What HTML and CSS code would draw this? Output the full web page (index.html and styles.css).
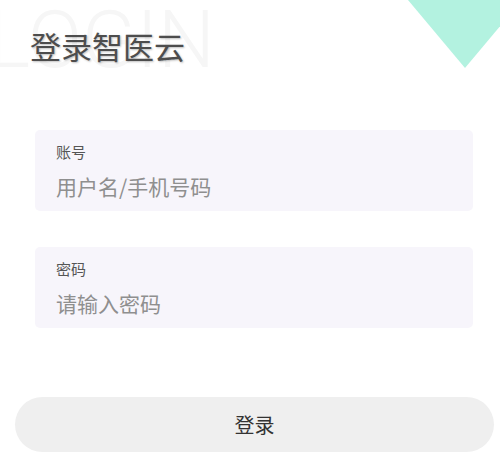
FILE: index.html
```html
<!DOCTYPE html>
<html lang="zh-CN">
<head>
<meta charset="utf-8">
<title>登录智医云</title>
<link rel="stylesheet" href="styles.css">
</head>
<body>
<div class="page">
  <header class="header">
    <div class="watermark">LOGIN</div>
    <div class="corner"></div>
    <h1 class="title">登录智医云</h1>
  </header>
  <form class="form">
    <label class="field">
      <span class="field-label">账号</span>
      <input class="field-input" type="text" placeholder="用户名/手机号码">
    </label>
    <label class="field">
      <span class="field-label">密码</span>
      <input class="field-input" type="password" placeholder="请输入密码">
    </label>
  </form>
  <div class="actions">
    <button class="login-btn" type="button">登录</button>
  </div>
</div>
</body>
</html>
```

FILE: styles.css
```css
html, body {
  margin: 0;
  padding: 0;
  background: #fff;
}
body {
  font-family: "Noto Sans CJK SC", "Noto Sans", sans-serif;
  width: 500px;
  height: 466px;
  overflow: hidden;
}
.page {
  position: relative;
  width: 500px;
  height: 466px;
}
.header {
  position: relative;
  height: 100px;
}
.watermark {
  position: absolute;
  left: -12px;
  top: -5px;
  font-family: Roboto, "Liberation Sans", sans-serif;
  font-weight: 300;
  font-size: 80px;
  line-height: 90px;
  color: #f6f6f6;
  white-space: nowrap;
  z-index: 0;
}
.corner {
  position: absolute;
  right: -22px;
  top: 0;
  width: 0;
  height: 0;
  border-left: 57px solid transparent;
  border-right: 57px solid transparent;
  border-top: 68px solid #b3f2e0;
}
.title {
  position: relative;
  z-index: 1;
  margin: 0;
  padding: 25px 0 0 30px;
  font-size: 31px;
  line-height: 42px;
  font-weight: 400;
  color: #4d4d4d;
  text-shadow: 1px 1px 2px rgba(0, 0, 0, 0.25);
}
.form {
  display: flex;
  flex-direction: column;
  gap: 36px;
  padding: 30px 27px 0 35px;
  margin: 0;
}
.field {
  display: flex;
  flex-direction: column;
  background: #f7f5fb;
  border-radius: 5px;
  height: 81px;
  box-sizing: border-box;
  padding: 11px 21px 0 21px;
}
.field-label {
  font-size: 15px;
  line-height: 22px;
  color: #555;
}
.field-input {
  border: 0;
  outline: none;
  background: transparent;
  padding: 0;
  margin: 9px 0 0 0;
  font-family: "Noto Sans CJK SC", "Noto Sans", sans-serif;
  font-size: 21px;
  line-height: 28px;
  height: 28px;
  color: #333;
}
.field-input::placeholder {
  color: #8f8f8f;
}
.actions {
  padding: 69px 6px 0 15px;
}
.login-btn {
  display: block;
  width: 100%;
  height: 55px;
  border: 0;
  border-radius: 28px;
  background: #efefef;
  font-family: "Noto Sans CJK SC", "Noto Sans", sans-serif;
  font-size: 20px;
  color: #333;
  cursor: pointer;
}
```
